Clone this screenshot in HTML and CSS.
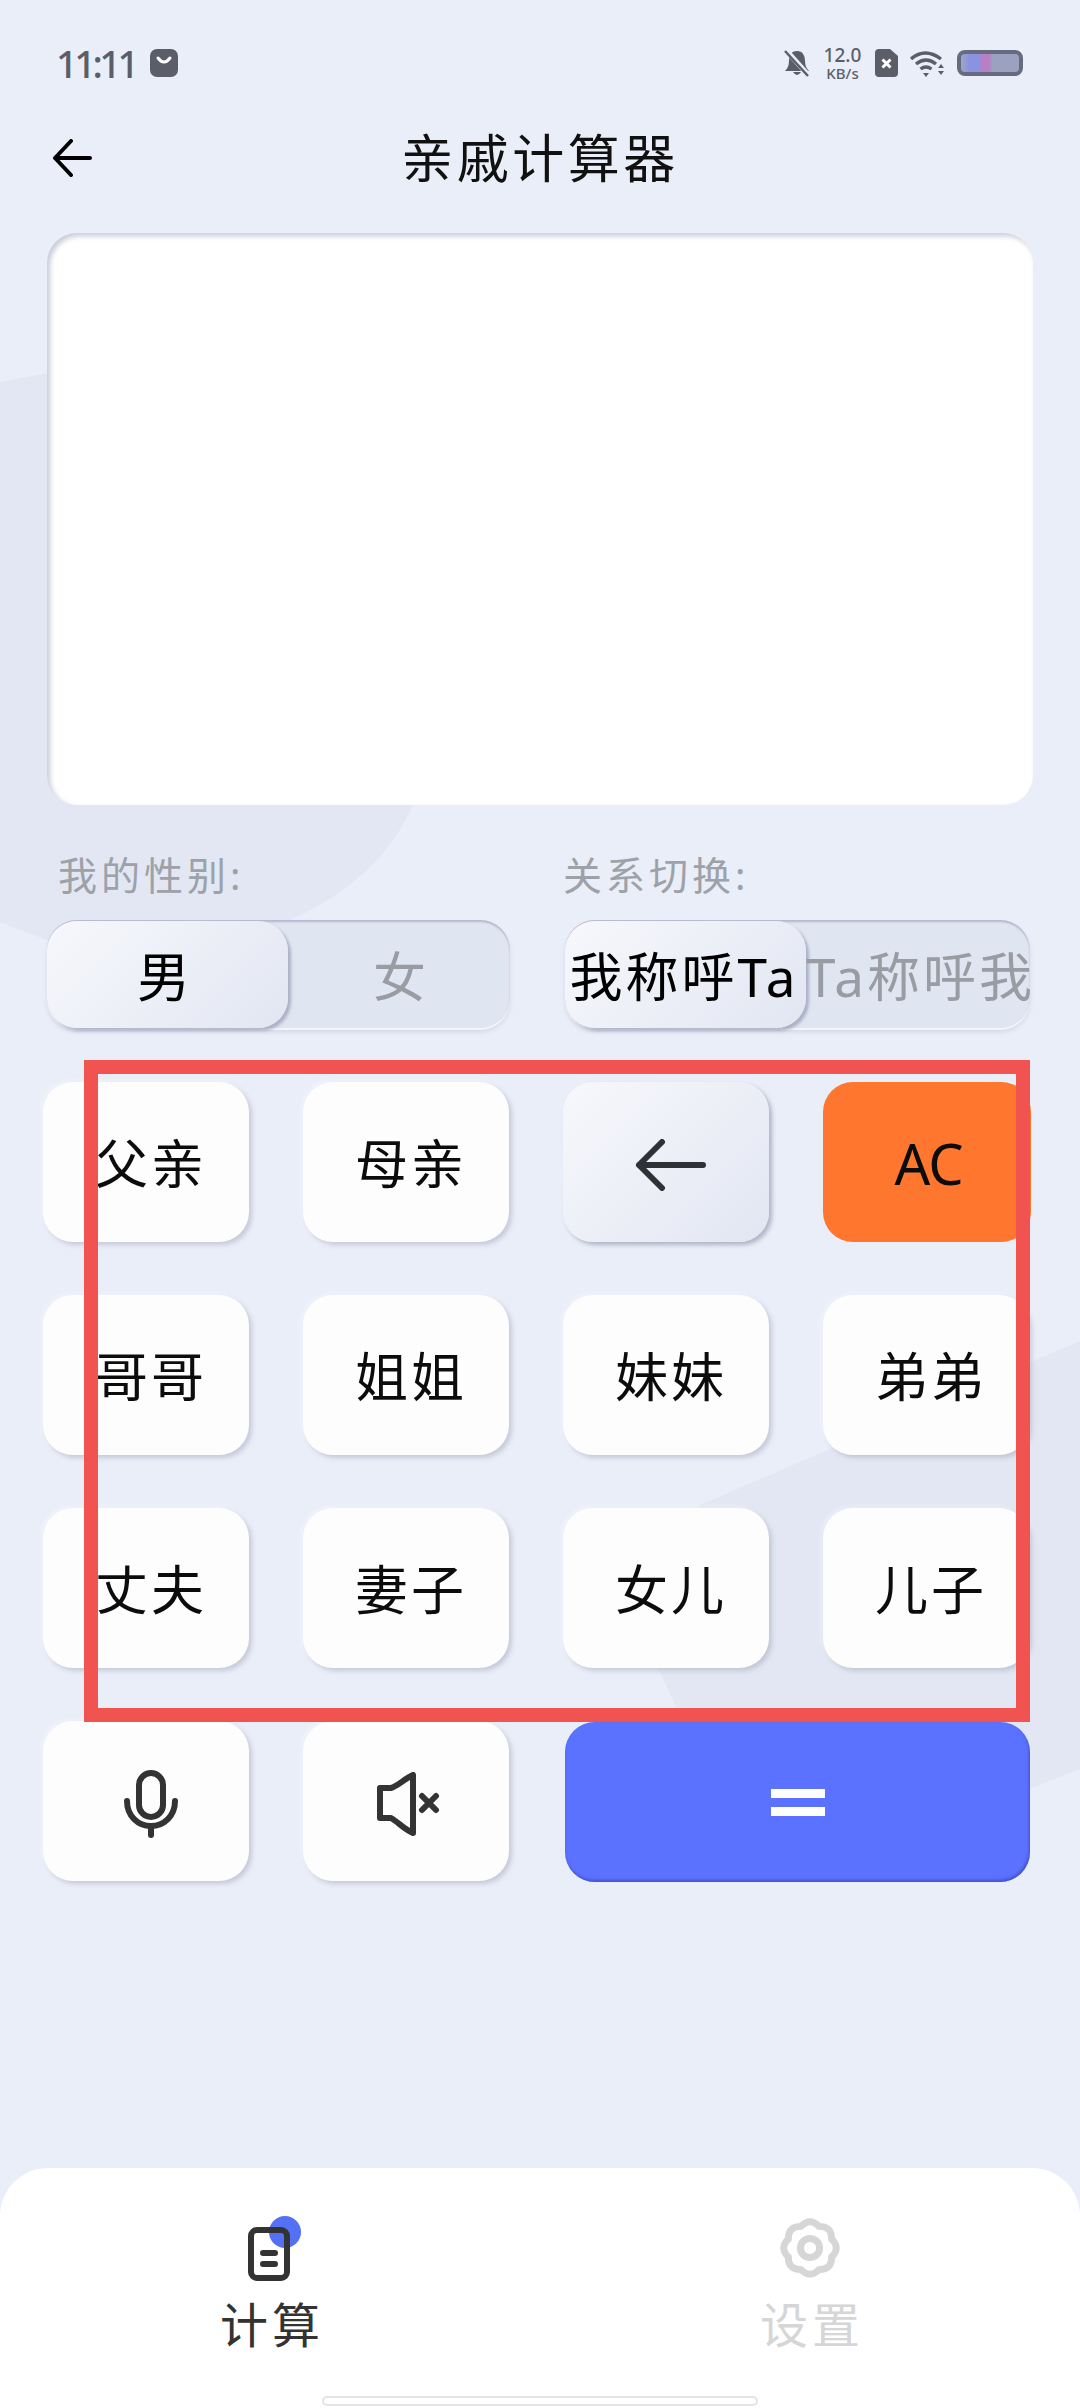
FILE: index.html
```html
<!DOCTYPE html>
<html lang="zh-CN">
<head>
    <meta charset="UTF-8">
    <meta name="viewport" content="width=device-width, initial-scale=1.0">
    <title>亲戚计算器</title>
    <link rel="stylesheet" href="styles.css">
</head>
<body>
<div class="page">
    <svg class="bg-shapes" viewBox="0 0 1080 2408" width="1080" height="2408">
        <path d="M0 382 L440 300 L413 805 Q380 880 290 920 Q170 975 60 945 L0 922 Z"/>
        <path d="M1080 1341 L700 1505 L648 1560 L650 1650 L700 1760 L850 1860 L1080 1769 Z"/>
    </svg>

    <div class="status-bar">
        <div class="status-left">
            <span class="time">11:11</span>
            <svg width="28" height="28" viewBox="0 0 28 28">
                <rect width="28" height="28" rx="7" fill="#5b5e68"/>
                <path d="M8 9 Q14 17 20 9" fill="none" stroke="#fff" stroke-width="3" stroke-linecap="round"/>
            </svg>
        </div>
        <div class="status-right">
            <svg width="26" height="28" viewBox="0 0 26 28">
                <path d="M13 2 C7 2 5 7 5 12 C5 17 3 20 1 22 L25 22 C23 20 21 17 21 12 C21 7 19 2 13 2 Z M9 23 Q13 29 17 23 Z" fill="#5b5e68"/>
                <path d="M2 1 L25 27" stroke="#eaeef8" stroke-width="5"/>
                <path d="M1 2 L24 27" stroke="#5b5e68" stroke-width="2.5"/>
            </svg>
            <div class="speed">
                <span class="speed-num">12.0</span>
                <span class="speed-unit">KB/s</span>
            </div>
            <svg width="23" height="28" viewBox="0 0 23 28">
                <path d="M4 0 H15 L23 7 V24 Q23 28 19 28 H4 Q0 28 0 24 V4 Q0 0 4 0 Z" fill="#5b5e68"/>
                <path d="M7.5 10.5 L15.5 18.5 M15.5 10.5 L7.5 18.5" stroke="#fff" stroke-width="3"/>
            </svg>
            <svg width="35" height="27" viewBox="0 0 35 27">
                <g fill="none" stroke="#5b5e68" stroke-width="3.4">
                    <path d="M1 9 Q15 -3 31 9"/>
                    <path d="M6 14 Q16 6 26 14"/>
                    <path d="M10.5 19 Q16 15 21.5 19"/>
                </g>
                <path d="M13 23 H19 L16 27 Z M28 18 L31 14 L34 18 Z M28 21 H34 L31 25 Z" fill="#5b5e68"/>
            </svg>
            <div class="battery"></div>
        </div>
    </div>

    <div class="title-bar">
        <svg class="back-icon" width="40" height="38" viewBox="0 0 40 38">
            <path d="M38 19 H3 M19 2 L3 19 L19 36" fill="none" stroke="#000" stroke-width="4" stroke-linecap="round" stroke-linejoin="round"/>
        </svg>
        <span class="title">亲戚计算器</span>
    </div>

    <div class="result-card"></div>

    <div class="options">
        <div class="option">
            <div class="option-label">我的性别:</div>
            <div class="toggle">
                <div class="toggle-on">男</div>
                <div class="toggle-off">女</div>
            </div>
        </div>
        <div class="option">
            <div class="option-label option-label-2">关系切换:</div>
            <div class="toggle toggle-wide">
                <div class="toggle-on">我称呼Ta</div>
                <div class="toggle-off">Ta称呼我</div>
            </div>
        </div>
    </div>

    <div class="keys">
        <div class="key">父亲</div>
        <div class="key">母亲</div>
        <div class="key key-back">
            <svg width="72" height="52" viewBox="0 0 72 52">
                <path d="M68 26 H4 M27 3 L4 26 L27 49" fill="none" stroke="#2f3136" stroke-width="6" stroke-linecap="round" stroke-linejoin="round"/>
            </svg>
        </div>
        <div class="key key-ac">AC</div>
        <div class="key">哥哥</div>
        <div class="key">姐姐</div>
        <div class="key">妹妹</div>
        <div class="key">弟弟</div>
        <div class="key">丈夫</div>
        <div class="key">妻子</div>
        <div class="key">女儿</div>
        <div class="key">儿子</div>
        <div class="key key-mic">
            <svg width="54" height="68" viewBox="0 0 54 68">
                <rect x="15" y="3" width="24" height="44" rx="12" fill="none" stroke="#333" stroke-width="6"/>
                <path d="M3 31 C3 46 14 56 27 56 C40 56 51 46 51 31 M27 56 V65" fill="none" stroke="#333" stroke-width="6" stroke-linecap="round"/>
            </svg>
        </div>
        <div class="key key-mute">
            <svg width="64" height="64" viewBox="0 0 64 64">
                <path d="M4 16 H15 C22 14 28 7 37 3 V61 C28 57 22 50 15 46 H4 Z" fill="none" stroke="#333" stroke-width="6" stroke-linejoin="round"/>
                <path d="M46 24 L60 38 M60 24 L46 38" stroke="#333" stroke-width="6" stroke-linecap="round"/>
            </svg>
        </div>
        <div class="key key-equal">
            <div class="equal-bar"></div>
            <div class="equal-bar"></div>
        </div>
    </div>

    <div class="tab-bar">
        <div class="tabs">
            <div class="tab tab-active">
                <svg width="64" height="66" viewBox="0 0 64 66">
                    <circle cx="47" cy="17" r="16" fill="#5470f5"/>
                    <rect x="13" y="15" width="36" height="48" rx="6" fill="none" stroke="#333" stroke-width="6"/>
                    <path d="M25 38 H37 M25 49 H37" stroke="#333" stroke-width="6" stroke-linecap="round"/>
                </svg>
                <span class="tab-label">计算</span>
            </div>
            <div class="tab">
                <svg width="64" height="66" viewBox="0 0 60 62">
                    <path d="M21.58 10.67 Q30 2 38.42 10.67 Q50.5 10.5 50.33 22.58 Q59 31 50.33 39.42 Q50.5 51.5 38.42 51.33 Q30 60 21.58 51.33 Q9.5 51.5 9.67 39.42 Q1 31 9.67 22.58 Q9.5 10.5 21.58 10.67 Z" fill="none" stroke="#d6d6d6" stroke-width="6.5"/>
                    <circle cx="30" cy="31" r="9" fill="none" stroke="#d6d6d6" stroke-width="6.5"/>
                </svg>
                <span class="tab-label">设置</span>
            </div>
        </div>
        <div class="home-bar"></div>
    </div>

    <div class="highlight-box"></div>
</div>
</body>
</html>
```

FILE: styles.css
```css
* {
    box-sizing: border-box;
}
body {
    margin: 0;
    font-family: "Noto Sans", "Noto Sans CJK SC", sans-serif;
    color: #111;
}
.page {
    position: relative;
    width: 1080px;
    height: 2408px;
    overflow: hidden;
    display: flex;
    flex-direction: column;
    background: #eaeef8;
}
.bg-shapes {
    position: absolute;
    top: 0;
    left: 0;
    fill: #e2e7f3;
}
.status-bar {
    position: relative;
    height: 126px;
    padding: 0 57px 0 56px;
    display: flex;
    align-items: center;
    justify-content: space-between;
    color: #5b5e68;
}
.status-left {
    display: flex;
    align-items: center;
    gap: 14px;
}
.time {
    font-size: 38px;
    line-height: 1;
    font-weight: 500;
    letter-spacing: -3.5px;
}
.status-right {
    display: flex;
    align-items: center;
    gap: 12px;
}
.speed {
    width: 41px;
    display: flex;
    flex-direction: column;
    align-items: center;
    font-weight: 500;
}
.speed-num {
    font-size: 19px;
    line-height: 20px;
}
.speed-unit {
    font-size: 15px;
    line-height: 17px;
}
.battery {
    width: 66px;
    height: 26px;
    border: 4px solid #666b80;
    border-radius: 8px;
    background: linear-gradient(90deg, #a0a6c6 0, #8a93e0 14%, #8a93e0 30%, #b67fc6 36%, #b67fc6 48%, #9aa2c0 55%, #9aa2c0 100%);
}
.title-bar {
    position: relative;
    height: 64px;
    display: flex;
    align-items: center;
    justify-content: center;
}
.back-icon {
    position: absolute;
    left: 52px;
    top: 13px;
}
.title {
    font-size: 52px;
    line-height: 1;
    letter-spacing: 3.5px;
}
.result-card {
    position: relative;
    height: 572px;
    margin: 43px 47px 0 47px;
    background: #fff;
    border-radius: 30px;
    box-shadow: inset 3px 3px 5px rgba(165, 170, 190, 0.6);
}
.options {
    position: relative;
    margin-top: 50px;
    padding: 0 50px 0 47px;
    display: grid;
    grid-template-columns: 463px 465px;
    column-gap: 55px;
}
.option-label {
    margin-left: 11px;
    font-size: 39px;
    line-height: 40px;
    letter-spacing: 4px;
    color: #9da1a8;
}
.option-label-2 {
    margin-left: -2px;
}
.toggle {
    margin-top: 25px;
    height: 108px;
    display: flex;
    align-items: center;
    border-radius: 30px;
    background: #e0e5f2;
    box-shadow: inset 0 2px 2px rgba(160, 165, 190, 0.7), 0 2px 1px #f4f6fb, 0 4px 4px rgba(170, 175, 195, 0.35);
    font-size: 53px;
    line-height: 1;
    letter-spacing: 2px;
    white-space: nowrap;
}
.toggle-wide {
    letter-spacing: 3px;
}
.toggle-on {
    flex: 0 0 241px;
    height: 107px;
    padding: 4px 6px 0 0;
    display: flex;
    align-items: center;
    justify-content: center;
    border-radius: 30px;
    background: linear-gradient(135deg, #f7f8fc, #e2e6f2);
    box-shadow: 3px 3px 3px rgba(150, 155, 180, 0.7);
    color: #000;
}
.toggle-off {
    flex: 1;
    padding: 4px 0 0 3px;
    display: flex;
    justify-content: center;
    color: #9a9ca3;
}
.toggle-wide .toggle-on {
    padding-right: 3px;
}
.toggle-wide .toggle-off {
    padding-left: 0;
}
.keys {
    position: relative;
    margin-top: 54px;
    padding-left: 43px;
    display: grid;
    grid-template-columns: repeat(4, 206px);
    grid-auto-rows: 160px;
    column-gap: 54px;
    row-gap: 53px;
}
.key {
    display: flex;
    align-items: center;
    justify-content: center;
    padding: 2px 0 0 10px;
    border-radius: 30px;
    background: #fdfdfe;
    box-shadow: 3px 3px 4px rgba(165, 170, 190, 0.5), -2px -2px 4px rgba(255, 255, 255, 0.35);
    font-size: 53px;
    line-height: 1;
    letter-spacing: 3px;
    color: #0c0c0c;
}
.key-back {
    padding: 6px 0 0 9px;
    background: linear-gradient(135deg, #f7f8fc, #e2e6f2);
    box-shadow: 3px 3px 4px rgba(150, 155, 180, 0.7);
}
.key-ac {
    background: #ff762e;
    box-shadow: none;
    margin-right: -2px;
    padding: 2px 0 0 3px;
    font-size: 56px;
    letter-spacing: -1px;
}
.key-mic {
    padding: 5px 0 0 9px;
}
.key-mute {
    padding: 5px 0 0 4px;
}
.key-equal {
    grid-column: span 2;
    flex-direction: column;
    gap: 9px;
    padding: 0;
    margin: 1px -1px -1px 2px;
    background: #5a72ff;
    box-shadow: inset -1px -2px 3px rgba(50, 60, 170, 0.6);
}
.equal-bar {
    width: 54px;
    height: 9px;
    background: #fff;
}
.tab-bar {
    position: relative;
    margin-top: auto;
    height: 240px;
    display: flex;
    flex-direction: column;
    border-radius: 48px 48px 0 0;
    background: #fff;
}
.tabs {
    padding-top: 47px;
    display: grid;
    grid-template-columns: 540px 540px;
}
.tab {
    display: flex;
    flex-direction: column;
    align-items: center;
    gap: 18px;
    color: #d6d6d6;
}
.tab-active {
    color: #333;
}
.tab-label {
    padding-left: 4px;
    font-size: 48px;
    line-height: 52px;
    letter-spacing: 4px;
}
.home-bar {
    width: 436px;
    height: 10px;
    margin: auto auto 2px auto;
    border: 2px solid #e4e4e4;
    border-radius: 5px;
    background: #fff;
}
.highlight-box {
    position: absolute;
    left: 84px;
    top: 1060px;
    width: 946px;
    height: 662px;
    border: 14px solid #f05350;
}
```
